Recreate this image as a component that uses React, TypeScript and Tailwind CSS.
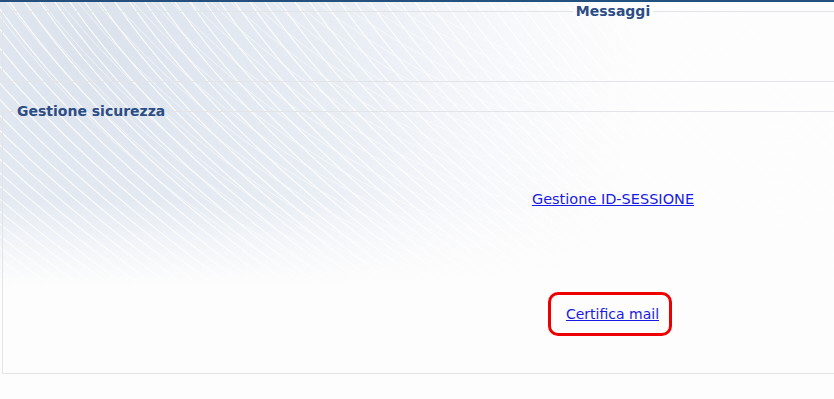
import React from "react";

const font = { fontFamily: '"DejaVu Sans", Verdana, sans-serif' };

function Mesh() {
  // decorative mesh background (fan of curves + sweeping arcs)
  const fan = Array.from({ length: 70 }, (_, i) => i);
  const arcs = Array.from({ length: 22 }, (_, i) => i);
  return (
    <svg
      className="absolute inset-0 pointer-events-none"
      width="834"
      height="399"
      viewBox="0 0 834 399"
    >
      <defs>
        <radialGradient id="bg" cx="90" cy="40" r="560" gradientUnits="userSpaceOnUse">
          <stop offset="0" stopColor="#dbe2ec" />
          <stop offset="0.45" stopColor="#e8edf4" />
          <stop offset="0.75" stopColor="#f7f8fb" />
          <stop offset="1" stopColor="#fdfdfd" />
        </radialGradient>
        <linearGradient id="fade" x1="0" y1="0" x2="0" y2="1">
          <stop offset="0" stopColor="#fdfdfd" stopOpacity="0" />
          <stop offset="0.5" stopColor="#fdfdfd" stopOpacity="0" />
          <stop offset="0.72" stopColor="#fdfdfd" stopOpacity="1" />
        </linearGradient>
      </defs>
      <rect width="834" height="399" fill="url(#bg)" />
      <g stroke="#ffffff" strokeWidth="1.2" fill="none" opacity="0.85">
        {fan.map((i) => {
          const x0 = -320 + i * 15;
          return (
            <path
              key={i}
              d={`M ${x0} -20 Q ${x0 + 110} 150 ${x0 + 360} 320`}
            />
          );
        })}
      </g>
      <g stroke="#ffffff" strokeWidth="1" fill="none" opacity="0.6">
        {arcs.map((i) => (
          <circle key={i} cx={760} cy={-560} r={660 + i * 14} />
        ))}
      </g>
      <rect width="834" height="399" fill="url(#fade)" />
    </svg>
  );
}

export default function App() {
  return (
    <div className="relative w-[834px] h-[399px] overflow-hidden bg-[#fdfdfd]" style={font}>
      <Mesh />
      <div className="relative">
        <div className="h-[2px] bg-[#24507e]" />
        <fieldset className="ml-[2px] mt-[1px] w-[1222px] h-[79px] border border-[#e2e4e8]">
          <legend className="mx-auto px-[3px] text-[14px] font-bold leading-[17px] text-[#2b4c84]">
            Messaggi
          </legend>
        </fieldset>
        <fieldset className="ml-[2px] mt-[21px] w-[1222px] h-[271px] border border-[#e2e4e8]">
          <legend className="ml-[11px] px-[3px] text-[14px] font-bold leading-[17px] text-[#2b4c84]">
            Gestione sicurezza
          </legend>
          <div className="flex flex-col items-center pt-[70px]">
            <a
              href="#"
              className="text-[14.5px] leading-[18px] text-[#1a1ae6] underline"
            >
              Gestione ID-SESSIONE
            </a>
            <div className="mt-[84px] -translate-x-[3px] rounded-[10px] border-[3px] border-[#ee0000] pl-[15px] pr-[10px] py-[10px] leading-[18px]">
              <a
                href="#"
                className="text-[14px] leading-[18px] text-[#1a1ae6] underline"
              >
                Certifica mail
              </a>
            </div>
          </div>
        </fieldset>
      </div>
    </div>
  );
}
